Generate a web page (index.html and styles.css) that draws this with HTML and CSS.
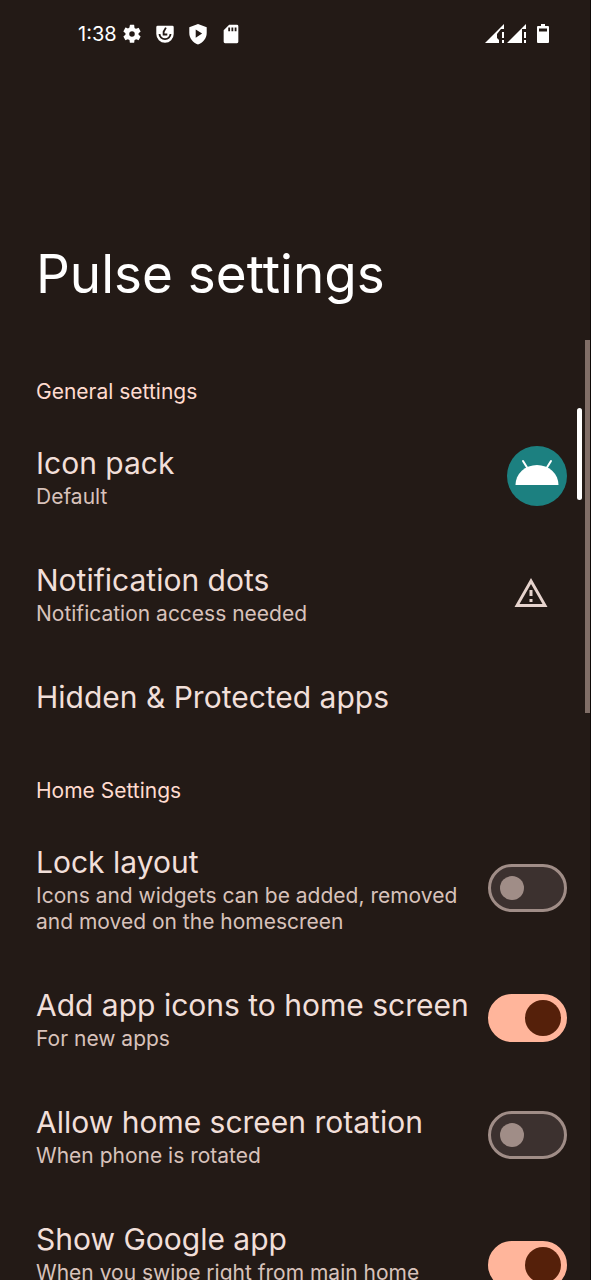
FILE: index.html
```html
<!DOCTYPE html>
<html lang="en">
<head>
<meta charset="utf-8">
<meta name="viewport" content="width=device-width, initial-scale=1">
<title>Pulse settings</title>
<link rel="stylesheet" href="styles.css">
</head>
<body>
<div class="screen">
  <header class="status">
    <div class="status-left">
      <time class="clock">1:38</time>
      <svg class="status-icon" viewBox="0 0 24 24" aria-hidden="true"><path fill-rule="evenodd" d="M19.14 12.94c.04-.3.06-.61.06-.94s-.02-.64-.07-.94l2.03-1.58a.5.5 0 0 0 .12-.61l-1.92-3.32a.5.5 0 0 0-.59-.22l-2.39.96a7 7 0 0 0-1.62-.94l-.36-2.54A.5.5 0 0 0 13.92 2h-3.84a.5.5 0 0 0-.47.41l-.36 2.54a7 7 0 0 0-1.62.94l-2.39-.96a.5.5 0 0 0-.59.22L2.74 8.87a.5.5 0 0 0 .12.61l2.03 1.58a6 6 0 0 0 0 1.88l-2.03 1.58a.5.5 0 0 0-.12.61l1.92 3.32c.12.22.37.29.59.22l2.39-.96c.5.38 1.03.7 1.62.94l.36 2.54c.05.24.24.41.48.41h3.84c.24 0 .44-.17.47-.41l.36-2.54a7 7 0 0 0 1.62-.94l2.39.96c.22.08.47 0 .59-.22l1.92-3.32a.5.5 0 0 0-.12-.61zM12 15a3 3 0 1 1 0-6 3 3 0 0 1 0 6z"/></svg>
      <svg class="status-icon" viewBox="0 0 24 24" aria-hidden="true"><path d="M4 3h16q1.500 0 1.500 1.500V12a9.500 9.500 0 0 1-19 0V4.500Q2.500 3 4 3z"/><path class="cut" d="M13 5l-2.500 4.500v3h4"/><path class="cut" d="M6 12a6 5.500 0 0 0 12 0"/></svg>
      <svg class="status-icon" viewBox="0 0 24 24" aria-hidden="true"><path fill-rule="evenodd" d="M12 1l9.500 3.500V11c0 6-4 10.500-9.500 12.500C6.500 21.500 2.500 17 2.500 11V4.500zM9.500 7v9l7-4.500z"/></svg>
      <svg class="status-icon" viewBox="0 0 24 24" aria-hidden="true"><path fill-rule="evenodd" d="M10 2h8.500q1.500 0 1.500 1.500v17q0 1.500-1.500 1.500h-13Q4 22 4 20.500V8zM9 5v4h2V5zM12.500 5v4h2V5zM16 5v4h2V5z"/></svg>
    </div>
    <div class="status-right">
      <svg class="signal" viewBox="0 0 20 20" aria-hidden="true"><path d="M0 19L19 0v5h-3L12 10v4l2 2v3z"/><path d="M17 8h2v6h-2zM17 16h2v3h-2z"/></svg>
      <svg class="signal" viewBox="0 0 20 20" aria-hidden="true"><path d="M0 19L19 0v5h-4v14z"/><path d="M17 8h2v6h-2zM17 16h2v3h-2z"/></svg>
      <svg class="battery" viewBox="0 0 12 20" aria-hidden="true"><path fill-rule="evenodd" d="M4 0h4v2h3q1 0 1 1v15q0 1-1 1H1q-1 0-1-1V3q0-1 1-1h3zM2 4.500v3h8v-3z"/></svg>
    </div>
  </header>
  <main class="content">
    <h1 class="page-title">Pulse settings</h1>

    <section>
      <h2 class="section-title">General settings</h2>
      <button class="row" type="button">
        <span class="row-text"><span class="row-title">Icon pack</span><span class="row-note">Default</span></span>
        <svg class="pack-icon" viewBox="0 0 60 60" aria-hidden="true"><circle cx="30" cy="30" r="30" fill="#1c8080"/><path fill="#fff" d="M8.500 39a21.500 20 0 0 1 43 0z"/><path fill="none" stroke="#fff" stroke-width="2" stroke-linecap="round" d="M16 15l5 8M44 15l-5 8"/></svg>
      </button>
      <button class="row" type="button">
        <span class="row-text"><span class="row-title">Notification dots</span><span class="row-note">Notification access needed</span></span>
        <svg class="warning-icon" viewBox="0 0 34 30" aria-hidden="true"><path fill-rule="evenodd" d="M17 0L33.500 29H.5zM17 6L5.500 26h23zM15.500 12h3v6h-3zM15.500 21h3v3h-3z"/></svg>
      </button>
      <button class="row" type="button">
        <span class="row-text"><span class="row-title">Hidden &amp; Protected apps</span></span>
      </button>
    </section>

    <section>
      <h2 class="section-title">Home Settings</h2>
      <label class="row">
        <span class="row-text"><span class="row-title">Lock layout</span><span class="row-note">Icons and widgets can be added, removed and moved on the homescreen</span></span>
        <input class="switch" type="checkbox" role="switch">
      </label>
      <label class="row">
        <span class="row-text"><span class="row-title">Add app icons to home screen</span><span class="row-note">For new apps</span></span>
        <input class="switch" type="checkbox" role="switch" checked>
      </label>
      <label class="row">
        <span class="row-text"><span class="row-title">Allow home screen rotation</span><span class="row-note">When phone is rotated</span></span>
        <input class="switch" type="checkbox" role="switch">
      </label>
      <label class="row">
        <span class="row-text row-text-tall"><span class="row-title">Show Google app</span><span class="row-note">When you swipe right from main home</span></span>
        <input class="switch" type="checkbox" role="switch" checked>
      </label>
    </section>
  </main>
  <div class="edge-handle"></div>
  <div class="scroll-thumb"></div>
</div>
</body>
</html>
```
FILE: styles.css
```css
* {
  box-sizing: border-box;
}

body {
  margin: 0;
  background: #231a16;
  color: #f1dfd9;
  font-family: Inter, "Noto Sans", sans-serif;
}

.screen {
  position: relative;
  display: flex;
  flex-direction: column;
  height: 100vh;
  overflow: hidden;
  border-right: 1px solid #0f0a08;
}

.status {
  display: flex;
  flex: none;
  align-items: center;
  justify-content: space-between;
  height: 68px;
  padding: 0 41px 0 78px;
  color: #fff;
}

.status svg {
  fill: currentColor;
}

.status-left {
  display: flex;
  align-items: center;
  gap: 11px;
}

.clock {
  margin-right: -7px;
  font-size: 20px;
}

.status-icon {
  width: 22px;
  height: 22px;
}

.status-icon .cut {
  fill: none;
  stroke: #231a16;
  stroke-width: 2;
}

.status-right {
  display: flex;
  align-items: center;
  gap: 2px;
}

.signal {
  width: 20px;
  height: 20px;
}

.battery {
  width: 12px;
  height: 20px;
  margin-left: 8px;
}

.content {
  flex: 1;
  min-height: 0;
  overflow-y: auto;
  scrollbar-width: none;
}

.page-title {
  margin: 0;
  padding: 170px 36px 34px;
  color: #fff;
  font-size: 53px;
  font-weight: 400;
  line-height: 72px;
}

.section-title {
  margin: 0;
  padding: 35px 36px 13px;
  color: #ffdbcf;
  font-size: 21px;
  font-weight: 400;
  line-height: 26px;
}

.row {
  display: flex;
  align-items: center;
  justify-content: space-between;
  gap: 16px;
  width: 100%;
  padding: 24px 23px 25px 36px;
  border: 0;
  background: none;
  color: inherit;
  font: inherit;
  text-align: left;
}

.row-text {
  display: flex;
  flex: 1;
  flex-direction: column;
}

.row-text-tall {
  min-height: 94px;
}

.row-title {
  font-size: 30px;
  line-height: 42px;
}

.row-note {
  color: #d8c2bb;
  font-size: 21px;
  line-height: 26px;
}

.pack-icon {
  width: 60px;
  height: 60px;
}

.warning-icon {
  width: 34px;
  height: 30px;
  margin-right: 19px;
  fill: #e6d3cd;
}

.switch {
  flex: none;
  display: flex;
  align-items: center;
  width: 79px;
  height: 48px;
  margin: 0;
  padding: 0 9px;
  border: 3px solid #a08d87;
  border-radius: 24px;
  background: #3c312f;
  appearance: none;
}

.switch::before {
  content: "";
  width: 24px;
  height: 24px;
  border-radius: 50%;
  background: #a08d87;
}

.switch:checked {
  justify-content: flex-end;
  padding: 0 3px;
  border-color: #ffb59b;
  background: #ffb59b;
}

.switch:checked::before {
  width: 36px;
  height: 36px;
  background: #55200a;
}

.edge-handle {
  position: absolute;
  top: 408px;
  right: 8px;
  width: 5px;
  height: 92px;
  border-radius: 3px;
  background: #fff;
}

.scroll-thumb {
  position: absolute;
  top: 340px;
  right: -1px;
  width: 6px;
  height: 373px;
  background: #806e67;
}
```
